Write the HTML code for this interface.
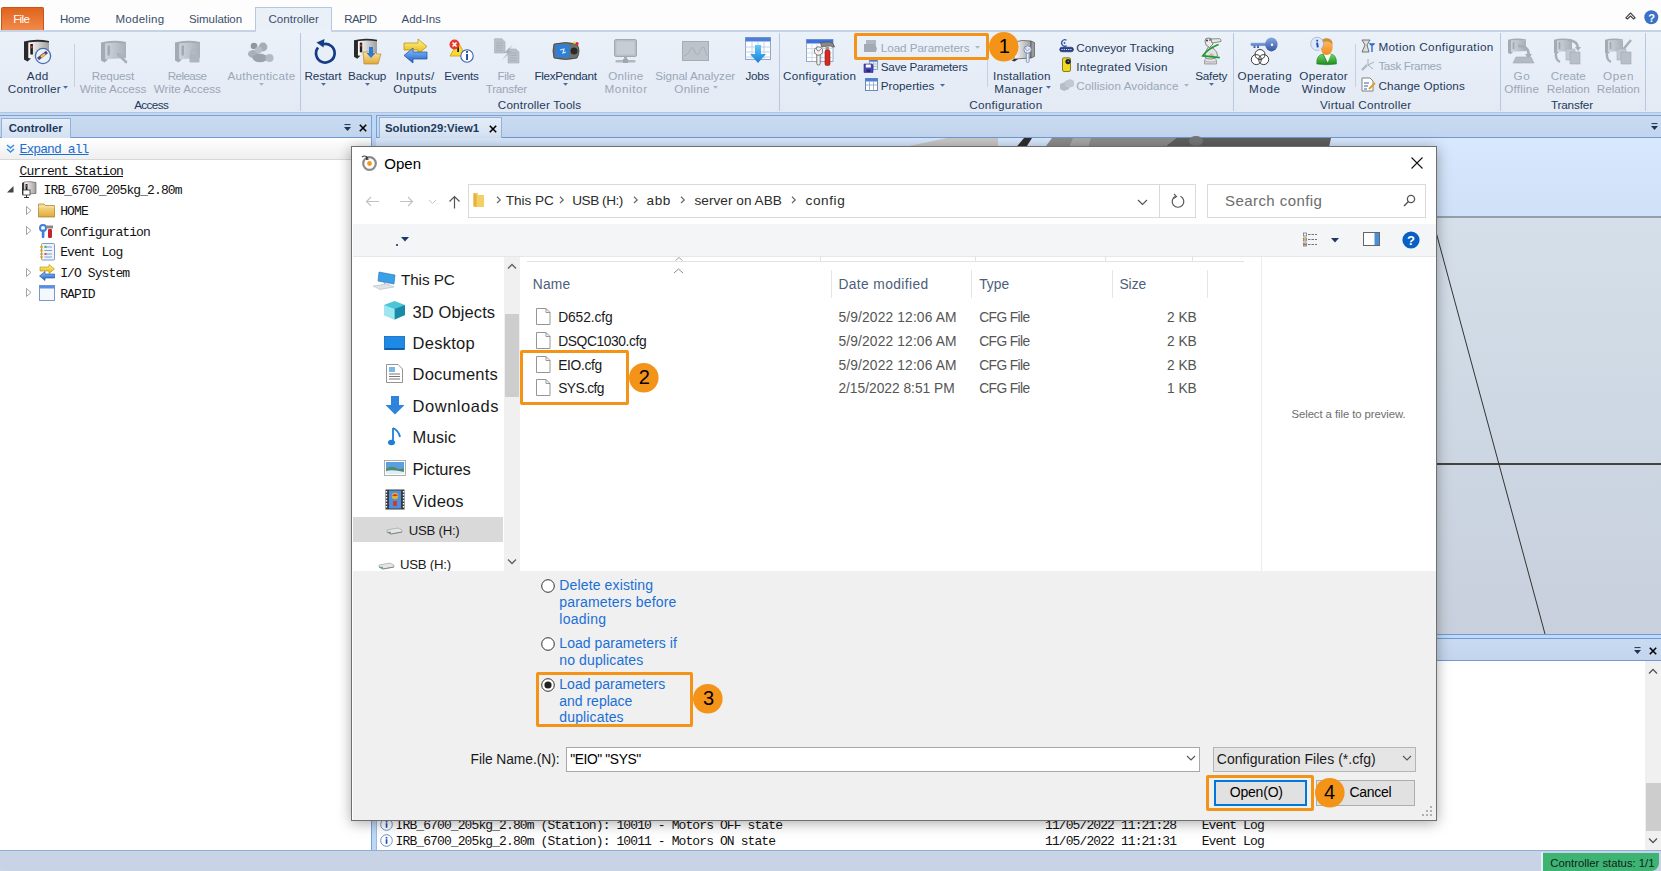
<!DOCTYPE html>
<html><head><meta charset="utf-8">
<style>
*{box-sizing:border-box;margin:0;padding:0}
html,body{width:1661px;height:871px;overflow:hidden;background:#c9d6e8;font-family:"Liberation Sans",sans-serif;position:relative}
.a{position:absolute}
.t{position:absolute;white-space:nowrap}
svg{overflow:visible}
</style></head><body>
<div class="a" style="left:0px;top:0px;width:1661px;height:31px;background:#fdfdfe"></div>
<div class="a" style="left:1px;top:7px;width:43px;height:24px;background:linear-gradient(#e0641c,#f28c4e);border:1px solid #c9541a;border-bottom:none;border-radius:2px 2px 0 0"></div>
<div class="t" style="top:14.00px;font-size:11.5px;color:#fff;left:13.20px;line-height:11.5px;letter-spacing:-0.600px;">File</div>
<div class="t" style="top:14.00px;font-size:11.5px;color:#3b4e69;left:59.90px;line-height:11.5px;letter-spacing:-0.159px;">Home</div>
<div class="t" style="top:14.00px;font-size:11.5px;color:#3b4e69;left:115.40px;line-height:11.5px;letter-spacing:0.290px;">Modeling</div>
<div class="t" style="top:14.00px;font-size:11.5px;color:#3b4e69;left:189.00px;line-height:11.5px;letter-spacing:-0.066px;">Simulation</div>
<div class="t" style="top:14.00px;font-size:11.5px;color:#3b4e69;left:344.30px;line-height:11.5px;letter-spacing:-0.600px;">RAPID</div>
<div class="t" style="top:14.00px;font-size:11.5px;color:#3b4e69;left:401.60px;line-height:11.5px;letter-spacing:-0.072px;">Add-Ins</div>
<div class="a" style="left:255px;top:7px;width:77px;height:25px;background:#eaf0f8;border:1px solid #b6c7de;border-bottom:none"></div>
<div class="t" style="top:14.00px;font-size:11.5px;color:#3b4e69;left:268.40px;line-height:11.5px;letter-spacing:0.061px;">Controller</div>
<svg class="a" style="left:1625px;top:12px" width="11" height="8" viewBox="0 0 11 8"><path d="M0.8 5.8 L5.5 1 L10.2 5.8 L8.6 7 L5.5 4 L2.4 7 Z" fill="#fff" stroke="#444" stroke-width="1.1" stroke-linejoin="round"/></svg>
<svg class="a" style="left:1643.5px;top:9.5px" width="15" height="15" viewBox="0 0 15 15"><circle cx="7.3" cy="7.2" r="7" fill="#3a72c6"/><text x="7.5" y="12" font-size="11" font-weight="bold" text-anchor="middle" fill="#fff" font-family="Liberation Sans">?</text></svg>
<div class="a" style="left:0px;top:30px;width:1661px;height:83px;background:linear-gradient(#ebf1f9,#e3eaf4);border-top:2px solid #c6d3e4"></div>
<div class="a" style="left:0px;top:112px;width:1661px;height:1px;background:#b3c5dc"></div>
<div class="a" style="left:256px;top:30px;width:75px;height:3px;background:#ebf1f9"></div>
<div class="a" style="left:300px;top:33px;width:1px;height:78px;background:#b8c9df"></div>
<div class="a" style="left:779px;top:33px;width:1px;height:78px;background:#b8c9df"></div>
<div class="a" style="left:1233px;top:33px;width:1px;height:78px;background:#b8c9df"></div>
<div class="a" style="left:1500px;top:33px;width:1px;height:78px;background:#b8c9df"></div>
<div class="a" style="left:1645px;top:33px;width:1px;height:78px;background:#b8c9df"></div>
<div class="a" style="left:74px;top:44px;width:1px;height:43px;background:#c3d1e3"></div>
<div class="a" style="left:987px;top:38px;width:1px;height:49px;background:#c3d1e3"></div>
<div class="a" style="left:1355px;top:44px;width:1px;height:43px;background:#c3d1e3"></div>
<div class="t" style="top:99.00px;font-size:11.7px;color:#1e395b;left:-148.80px;width:600px;text-align:center;line-height:11.7px;letter-spacing:-0.600px;">Access</div>
<div class="t" style="top:99.00px;font-size:11.7px;color:#1e395b;left:239.58px;width:600px;text-align:center;line-height:11.7px;letter-spacing:0.155px;">Controller Tools</div>
<div class="t" style="top:99.00px;font-size:11.7px;color:#1e395b;left:705.84px;width:600px;text-align:center;line-height:11.7px;letter-spacing:0.284px;">Configuration</div>
<div class="t" style="top:99.00px;font-size:11.7px;color:#1e395b;left:1065.73px;width:600px;text-align:center;line-height:11.7px;letter-spacing:0.251px;">Virtual Controller</div>
<div class="t" style="top:99.00px;font-size:11.7px;color:#1e395b;left:1271.93px;width:600px;text-align:center;line-height:11.7px;letter-spacing:-0.147px;">Transfer</div>
<div class="t" style="top:70.00px;font-size:11.7px;color:#1e395b;left:-262.30px;width:600px;text-align:center;line-height:11.7px;letter-spacing:0.391px;">Add</div>
<div class="t" style="top:83.00px;font-size:11.7px;color:#1e395b;left:-265.67px;width:600px;text-align:center;line-height:11.7px;letter-spacing:0.264px;">Controller</div>
<div class="t" style="top:70.00px;font-size:11.7px;color:#9ba7b7;left:-187.10px;width:600px;text-align:center;line-height:11.7px;letter-spacing:-0.196px;">Request</div>
<div class="t" style="top:83.00px;font-size:11.7px;color:#9ba7b7;left:-187.04px;width:600px;text-align:center;line-height:11.7px;letter-spacing:-0.073px;">Write Access</div>
<div class="t" style="top:70.00px;font-size:11.7px;color:#9ba7b7;left:-112.99px;width:600px;text-align:center;line-height:11.7px;letter-spacing:-0.588px;">Release</div>
<div class="t" style="top:83.00px;font-size:11.7px;color:#9ba7b7;left:-112.71px;width:600px;text-align:center;line-height:11.7px;letter-spacing:-0.018px;">Write Access</div>
<div class="t" style="top:70.00px;font-size:11.7px;color:#9ba7b7;left:-38.57px;width:600px;text-align:center;line-height:11.7px;letter-spacing:0.250px;">Authenticate</div>
<svg class="a" style="left:259.0px;top:83.2px" width="5" height="3" viewBox="0 0 5 3"><path d="M0 0 L5 0 L2.5 2.8 Z" fill="#aab4c2"/></svg>
<div class="t" style="top:70.00px;font-size:11.7px;color:#1e395b;left:22.96px;width:600px;text-align:center;line-height:11.7px;letter-spacing:-0.085px;">Restart</div>
<svg class="a" style="left:320.7px;top:83.2px" width="5" height="3" viewBox="0 0 5 3"><path d="M0 0 L5 0 L2.5 2.8 Z" fill="#4a6aa2"/></svg>
<div class="t" style="top:70.00px;font-size:11.7px;color:#1e395b;left:67.12px;width:600px;text-align:center;line-height:11.7px;letter-spacing:-0.165px;">Backup</div>
<svg class="a" style="left:364.9px;top:83.2px" width="5" height="3" viewBox="0 0 5 3"><path d="M0 0 L5 0 L2.5 2.8 Z" fill="#4a6aa2"/></svg>
<div class="t" style="top:70.00px;font-size:11.7px;color:#1e395b;left:115.30px;width:600px;text-align:center;line-height:11.7px;letter-spacing:0.600px;">Inputs/</div>
<div class="t" style="top:83.00px;font-size:11.7px;color:#1e395b;left:115.21px;width:600px;text-align:center;line-height:11.7px;letter-spacing:0.421px;">Outputs</div>
<div class="t" style="top:70.00px;font-size:11.7px;color:#1e395b;left:161.39px;width:600px;text-align:center;line-height:11.7px;letter-spacing:-0.214px;">Events</div>
<div class="t" style="top:70.00px;font-size:11.7px;color:#9ba7b7;left:206.19px;width:600px;text-align:center;line-height:11.7px;letter-spacing:-0.418px;">File</div>
<div class="t" style="top:83.00px;font-size:11.7px;color:#9ba7b7;left:206.28px;width:600px;text-align:center;line-height:11.7px;letter-spacing:-0.247px;">Transfer</div>
<div class="t" style="top:70.00px;font-size:11.7px;color:#1e395b;left:265.54px;width:600px;text-align:center;line-height:11.7px;letter-spacing:-0.319px;">FlexPendant</div>
<svg class="a" style="left:563.4000000000001px;top:83.2px" width="5" height="3" viewBox="0 0 5 3"><path d="M0 0 L5 0 L2.5 2.8 Z" fill="#4a6aa2"/></svg>
<div class="t" style="top:70.00px;font-size:11.7px;color:#9ba7b7;left:325.94px;width:600px;text-align:center;line-height:11.7px;letter-spacing:0.276px;">Online</div>
<div class="t" style="top:83.00px;font-size:11.7px;color:#9ba7b7;left:326.10px;width:600px;text-align:center;line-height:11.7px;letter-spacing:0.600px;">Monitor</div>
<div class="t" style="top:70.00px;font-size:11.7px;color:#9ba7b7;left:395.18px;width:600px;text-align:center;line-height:11.7px;letter-spacing:-0.032px;">Signal Analyzer</div>
<div class="t" style="top:83.00px;font-size:11.7px;color:#9ba7b7;left:392.05px;width:600px;text-align:center;line-height:11.7px;letter-spacing:0.296px;">Online</div>
<div class="t" style="top:70.00px;font-size:11.7px;color:#1e395b;left:457.36px;width:600px;text-align:center;line-height:11.7px;letter-spacing:-0.271px;">Jobs</div>
<div class="t" style="top:70.00px;font-size:11.7px;color:#1e395b;left:519.65px;width:600px;text-align:center;line-height:11.7px;letter-spacing:0.300px;">Configuration</div>
<svg class="a" style="left:817.2px;top:83.2px" width="5" height="3" viewBox="0 0 5 3"><path d="M0 0 L5 0 L2.5 2.8 Z" fill="#4a6aa2"/></svg>
<div class="t" style="top:70.00px;font-size:11.7px;color:#1e395b;left:721.87px;width:600px;text-align:center;line-height:11.7px;letter-spacing:0.142px;">Installation</div>
<div class="t" style="top:83.00px;font-size:11.7px;color:#1e395b;left:718.68px;width:600px;text-align:center;line-height:11.7px;letter-spacing:0.353px;">Manager</div>
<div class="t" style="top:70.00px;font-size:11.7px;color:#1e395b;left:911.19px;width:600px;text-align:center;line-height:11.7px;letter-spacing:-0.214px;">Safety</div>
<svg class="a" style="left:1209.0px;top:83.2px" width="5" height="3" viewBox="0 0 5 3"><path d="M0 0 L5 0 L2.5 2.8 Z" fill="#4a6aa2"/></svg>
<div class="t" style="top:70.00px;font-size:11.7px;color:#1e395b;left:964.78px;width:600px;text-align:center;line-height:11.7px;letter-spacing:0.365px;">Operating</div>
<div class="t" style="top:83.00px;font-size:11.7px;color:#1e395b;left:964.90px;width:600px;text-align:center;line-height:11.7px;letter-spacing:0.600px;">Mode</div>
<div class="t" style="top:70.00px;font-size:11.7px;color:#1e395b;left:1023.67px;width:600px;text-align:center;line-height:11.7px;letter-spacing:0.347px;">Operator</div>
<div class="t" style="top:83.00px;font-size:11.7px;color:#1e395b;left:1023.70px;width:600px;text-align:center;line-height:11.7px;letter-spacing:0.397px;">Window</div>
<div class="t" style="top:70.00px;font-size:11.7px;color:#9ba7b7;left:1221.90px;width:600px;text-align:center;line-height:11.7px;letter-spacing:0.600px;">Go</div>
<div class="t" style="top:83.00px;font-size:11.7px;color:#9ba7b7;left:1221.71px;width:600px;text-align:center;line-height:11.7px;letter-spacing:0.216px;">Offline</div>
<div class="t" style="top:70.00px;font-size:11.7px;color:#9ba7b7;left:1268.28px;width:600px;text-align:center;line-height:11.7px;letter-spacing:-0.044px;">Create</div>
<div class="t" style="top:83.00px;font-size:11.7px;color:#9ba7b7;left:1268.31px;width:600px;text-align:center;line-height:11.7px;letter-spacing:0.010px;">Relation</div>
<div class="t" style="top:70.00px;font-size:11.7px;color:#9ba7b7;left:1318.50px;width:600px;text-align:center;line-height:11.7px;letter-spacing:0.600px;">Open</div>
<div class="t" style="top:83.00px;font-size:11.7px;color:#9ba7b7;left:1318.21px;width:600px;text-align:center;line-height:11.7px;letter-spacing:0.010px;">Relation</div>
<div class="t" style="top:42.00px;font-size:11.7px;color:#9ba7b7;left:880.80px;line-height:11.7px;letter-spacing:-0.068px;">Load Parameters</div>
<svg class="a" style="left:975.2px;top:45.900000000000006px" width="5" height="3" viewBox="0 0 5 3"><path d="M0 0 L5 0 L2.5 2.8 Z" fill="#aab4c2"/></svg>
<div class="t" style="top:61.00px;font-size:11.7px;color:#1e395b;left:880.80px;line-height:11.7px;letter-spacing:-0.228px;">Save Parameters</div>
<div class="t" style="top:80.00px;font-size:11.7px;color:#1e395b;left:880.80px;line-height:11.7px;letter-spacing:0.030px;">Properties</div>
<svg class="a" style="left:939.7px;top:84.2px" width="5" height="3" viewBox="0 0 5 3"><path d="M0 0 L5 0 L2.5 2.8 Z" fill="#4a6aa2"/></svg>
<div class="t" style="top:42.00px;font-size:11.7px;color:#1e395b;left:1076.30px;line-height:11.7px;letter-spacing:0.016px;">Conveyor Tracking</div>
<div class="t" style="top:61.00px;font-size:11.7px;color:#1e395b;left:1076.30px;line-height:11.7px;letter-spacing:0.225px;">Integrated Vision</div>
<div class="t" style="top:80.00px;font-size:11.7px;color:#9ba7b7;left:1076.30px;line-height:11.7px;letter-spacing:0.058px;">Collision Avoidance</div>
<svg class="a" style="left:1183.9px;top:84.2px" width="5" height="3" viewBox="0 0 5 3"><path d="M0 0 L5 0 L2.5 2.8 Z" fill="#aab4c2"/></svg>
<div class="t" style="top:41.00px;font-size:11.7px;color:#1e395b;left:1378.40px;line-height:11.7px;letter-spacing:0.370px;">Motion Configuration</div>
<div class="t" style="top:60.00px;font-size:11.7px;color:#9ba7b7;left:1378.40px;line-height:11.7px;letter-spacing:-0.376px;">Task Frames</div>
<div class="t" style="top:80.00px;font-size:11.7px;color:#1e395b;left:1378.40px;line-height:11.7px;letter-spacing:0.149px;">Change Options</div>
<svg class="a" style="left:0;top:0" width="0" height="0"><defs>
<linearGradient id="gCabF" x1="0" x2="1"><stop offset="0" stop-color="#ffffff"/><stop offset="1" stop-color="#a0a0a0"/></linearGradient>
<linearGradient id="gCabG" x1="0" x2="1"><stop offset="0" stop-color="#cfd4db"/><stop offset="1" stop-color="#a9b0ba"/></linearGradient>
<linearGradient id="gYel" x1="0" y1="0" x2="0" y2="1"><stop offset="0" stop-color="#fff59a"/><stop offset="1" stop-color="#e8b400"/></linearGradient>
<linearGradient id="gBlu" x1="0" y1="0" x2="0" y2="1"><stop offset="0" stop-color="#8ec5ff"/><stop offset="1" stop-color="#1f5fc4"/></linearGradient>
<linearGradient id="gFold" x1="0" y1="0" x2="0" y2="1"><stop offset="0" stop-color="#fde39a"/><stop offset="1" stop-color="#e0a93a"/></linearGradient>
<linearGradient id="gArrB" x1="0" y1="0" x2="0" y2="1"><stop offset="0" stop-color="#5cc8ff"/><stop offset="1" stop-color="#1a7fd8"/></linearGradient>
<linearGradient id="gKey" x1="0" y1="0" x2="0" y2="1"><stop offset="0" stop-color="#8aa8e0"/><stop offset="1" stop-color="#3457a3"/></linearGradient>
<linearGradient id="gGreen" x1="0" y1="0" x2="0" y2="1"><stop offset="0" stop-color="#6fd86a"/><stop offset="1" stop-color="#1e8a1e"/></linearGradient>
<linearGradient id="gOrg" x1="0" y1="0" x2="0" y2="1"><stop offset="0" stop-color="#ffc070"/><stop offset="1" stop-color="#f08a20"/></linearGradient>
</defs></svg>
<svg class="a" style="left:24px;top:39px" width="28" height="27" viewBox="0 0 28 27"><g transform="scale(1,1)"><path d="M4.3 3.2 Q14 1.5 25 3.3 L25 18 L4.3 19.2 Z" fill="url(#gCabF)"/><path d="M0 2.5 Q12 -0.8 25 2 L25 3.6 Q14 1.8 4.3 3.4 L4.3 19 L7 19.4 L3.5 22.5 L0 20.5 Z" fill="#2a2a2a"/><rect x="6.3" y="5" width="2.6" height="10.5" fill="#1e1e1e"/><rect x="6.7" y="7" width="1.8" height="2.2" fill="#e8321e"/></g><circle cx="19" cy="17" r="7.6" fill="#e6f3fb" stroke="#4a6fa8" stroke-width="1.3"/><path d="M14 20 L23 13" stroke="#5a3b8c" stroke-width="3"/><path d="M17 18 L21 15" stroke="#f2c230" stroke-width="2.2"/></svg>
<svg class="a" style="left:101px;top:40px" width="28" height="26" viewBox="0 0 28 26"><g transform="scale(1,1)"><path d="M4.3 3.2 Q14 1.5 25 3.3 L25 18 L4.3 19.2 Z" fill="url(#gCabG)"/><path d="M0 2.5 Q12 -0.8 25 2 L25 3.6 Q14 1.8 4.3 3.4 L4.3 19 L7 19.4 L3.5 22.5 L0 20.5 Z" fill="#a3abb6"/><rect x="6.5" y="5.5" width="2.4" height="10" fill="#a0a8b2"/></g><path d="M17 14 L25 22" stroke="#a9b0ba" stroke-width="2.6" stroke-linecap="round"/></svg>
<svg class="a" style="left:175px;top:40px" width="28" height="26" viewBox="0 0 28 26"><g transform="scale(1,1)"><path d="M4.3 3.2 Q14 1.5 25 3.3 L25 18 L4.3 19.2 Z" fill="url(#gCabG)"/><path d="M0 2.5 Q12 -0.8 25 2 L25 3.6 Q14 1.8 4.3 3.4 L4.3 19 L7 19.4 L3.5 22.5 L0 20.5 Z" fill="#a3abb6"/><rect x="6.5" y="5.5" width="2.4" height="10" fill="#a0a8b2"/></g><rect x="14.5" y="14.5" width="10" height="8" rx="1" fill="#aeb5bf"/><path d="M16.5 15 V12.5 a3 3 0 0 1 6 0 V15" fill="none" stroke="#aeb5bf" stroke-width="1.5"/></svg>
<svg class="a" style="left:248px;top:42px" width="27" height="22" viewBox="0 0 27 22"><circle cx="6" cy="4" r="3.3" fill="#8d96a2"/><circle cx="15" cy="5" r="4.4" fill="#a6aeb8"/><ellipse cx="5.5" cy="12" rx="5.5" ry="4" fill="#a8b0ba"/><circle cx="10.5" cy="8" r="3.6" fill="#b8bec7"/><ellipse cx="12" cy="16" rx="7.5" ry="4.2" fill="#9ba3ae"/><circle cx="21.5" cy="16" r="4" fill="#b3bac3"/></svg>
<svg class="a" style="left:312px;top:38px" width="25" height="27" viewBox="0 0 25 27"><path d="M6 9.5 A9.3 9.3 0 1 0 11 6.2" fill="none" stroke="#143c86" stroke-width="2.7"/><path d="M4.5 4.5 L12.5 1 L11.5 9.5 Z" fill="#143c86"/></svg>
<svg class="a" style="left:354px;top:38px" width="28" height="27" viewBox="0 0 28 27"><g transform="scale(0.92,0.92)"><path d="M4.3 3.2 Q14 1.5 25 3.3 L25 18 L4.3 19.2 Z" fill="url(#gCabF)"/><path d="M0 2.5 Q12 -0.8 25 2 L25 3.6 Q14 1.8 4.3 3.4 L4.3 19 L7 19.4 L3.5 22.5 L0 20.5 Z" fill="#2a2a2a"/><rect x="6.3" y="5" width="2.6" height="10.5" fill="#1e1e1e"/><rect x="6.7" y="7" width="1.8" height="2.2" fill="#e8321e"/></g><path d="M9 14 L21 14 L23 16 L27 16 L24 26 L10 26 Z" fill="url(#gFold)" stroke="#b07a20" stroke-width="0.6"/><path d="M15 9 L19 9 L19 15 L21.5 15 L17 20 L12.5 15 L15 15 Z" fill="#2a7ad8"/></svg>
<svg class="a" style="left:403px;top:38px" width="25" height="27" viewBox="0 0 25 27"><path d="M1 5 L15 5 L15 1 L24 8.5 L15 16 L15 12 L1 12 Z" fill="url(#gYel)" stroke="#b08a00" stroke-width="0.7"/><path d="M24 14 L10 14 L10 10 L1 17.5 L10 25 L10 21 L24 21 Z" fill="url(#gBlu)" stroke="#1c4a9a" stroke-width="0.7"/></svg>
<svg class="a" style="left:449px;top:39px" width="26" height="25" viewBox="0 0 26 25"><path d="M9 3 L17 17 L1 17 Z" fill="#f5d93a" stroke="#c9a000" stroke-width="0.8"/><rect x="8.2" y="8" width="1.8" height="5" fill="#222"/><circle cx="5.5" cy="5.5" r="5" fill="#e53a2a"/><path d="M3.5 3.5 L7.5 7.5 M7.5 3.5 L3.5 7.5" stroke="#fff" stroke-width="1.5"/><circle cx="18" cy="17" r="6.2" fill="#fff" stroke="#3b5fb0" stroke-width="1.1"/><rect x="17.1" y="15" width="1.9" height="6" fill="#1f46a8"/><rect x="17.1" y="12" width="1.9" height="1.8" fill="#1f46a8"/></svg>
<svg class="a" style="left:494px;top:38px" width="26" height="27" viewBox="0 0 26 27"><path d="M0.5 0.7 L8 0.7 L11 3.7 L11 15 L0.5 15 Z" fill="#b9c0c9" stroke="#a6adb7" stroke-width="0.6"/><path d="M2 5 H9 M2 7.5 H9 M2 10 H9 M2 12.5 H9" stroke="#a3aab4" stroke-width="0.7"/><path d="M14 11 L22 11 L25 14 L25 25 L14 25 Z" fill="#b9c0c9" stroke="#a6adb7" stroke-width="0.6"/><path d="M15.5 15 H23 M15.5 17.5 H23 M15.5 20 H23 M15.5 22.5 H23" stroke="#a3aab4" stroke-width="0.7"/><path d="M19 6.5 L10 15 L13.5 15 L8 22 L17.5 13 L14 13 Z" fill="#a9b0ba"/></svg>
<svg class="a" style="left:552px;top:41px" width="29" height="21" viewBox="0 0 29 21"><path d="M2 3 Q0 10 2 17 Q14 20 25 17 Q29 10 25 3 Q14 0 2 3Z" fill="#6f6f6f" stroke="#3c3c3c" stroke-width="0.8"/><rect x="3.5" y="3.5" width="14" height="13" fill="#2f7fd6"/><circle cx="22" cy="10" r="3.5" fill="#2a2a2a"/><circle cx="25" cy="2.5" r="1.6" fill="#e8261b"/><circle cx="22.5" cy="1.8" r="1.3" fill="#f2d22b"/><path d="M8 9 L12 8 L11 12 L14 11" stroke="#cfe8ff" stroke-width="1.2" fill="none"/></svg>
<svg class="a" style="left:614px;top:39px" width="24" height="26" viewBox="0 0 24 26"><rect x="0.5" y="0.5" width="22" height="17" rx="1.5" fill="#b7bec7" stroke="#a2a9b3"/><rect x="2.5" y="2.5" width="18" height="13" fill="#c7cdd5"/><rect x="10" y="18" width="3" height="4" fill="#a9b0ba"/><rect x="1.5" y="21" width="20" height="2.5" rx="1" fill="#b1b8c1"/><rect x="9" y="20" width="5" height="4" fill="#a0a7b1"/></svg>
<svg class="a" style="left:682px;top:41px" width="27" height="21" viewBox="0 0 27 21"><rect x="0.5" y="0.5" width="26" height="19" fill="#bcc3cb" stroke="#a5acb5"/><path d="M2 15 Q6 14 9 8 Q11 4 13 11 Q15 17 18 10 Q20 5 22 6 L25 15" fill="none" stroke="#a2a9b3" stroke-width="0.8"/></svg>
<svg class="a" style="left:745px;top:37px" width="27" height="28" viewBox="0 0 27 28"><rect x="0.5" y="0.5" width="25" height="22" fill="#fff" stroke="#8fa6c8"/><rect x="0.5" y="0.5" width="25" height="4" fill="#4d7fd6"/><path d="M0.5 10 H25.5 M0.5 15 H25.5 M0.5 20 H25.5 M7 4.5 V22.5 M13 4.5 V22.5 M19 4.5 V22.5" stroke="#b9c8de" stroke-width="0.8"/><path d="M10 8 L16 8 L16 17 L21 17 L13 26 L5 17 L10 17 Z" fill="url(#gArrB)"/></svg>
<svg class="a" style="left:806px;top:39px" width="30" height="27" viewBox="0 0 30 27"><rect x="0.5" y="0.5" width="26.5" height="22" fill="#fff" stroke="#8ea3c2" stroke-width="0.9"/><rect x="0.5" y="0.5" width="26.5" height="4" fill="#3f72d8"/><path d="M1 9.5 H26.5 M1 14 H26.5 M1 18.5 H26.5 M6 4.5 V22 M11 4.5 V22 M16 4.5 V22 M21 4.5 V22" stroke="#c9d6ea" stroke-width="0.9"/><path d="M14.5 3.5 L24 3 Q28 4 28.5 8 L26 8 Q25 6.5 23 7 L15.5 8Z" fill="#8a8a8a" stroke="#444" stroke-width="0.6"/><rect x="19.5" y="7.5" width="3.6" height="6" fill="#9a9a9a"/><rect x="19" y="11" width="5" height="15.5" rx="1.6" fill="#d42a20" stroke="#8a1a14" stroke-width="0.6"/><rect x="10.8" y="14" width="3.4" height="12" rx="1.5" fill="#f2f2f2" stroke="#5a5a5a" stroke-width="0.8"/><circle cx="12.5" cy="12" r="4.2" fill="#f2f2f2" stroke="#5a5a5a" stroke-width="0.8"/><path d="M11 8.5 A2 2 0 1 0 14.5 10" fill="none" stroke="#6a6a6a" stroke-width="0.9"/></svg>
<svg class="a" style="left:1010px;top:38px" width="28" height="28" viewBox="0 0 28 28"><path d="M4 4 Q12 1.5 21 3 L21 20 L4 21 Z" fill="url(#gCabF)" stroke="#4a4a4a" stroke-width="0.7"/><path d="M21 3 L24.5 4.5 L24.5 18.5 L21 20Z" fill="#9a9a9a" stroke="#444" stroke-width="0.6"/><path d="M4 21 L1.5 22.5 L4.5 23.5 L8 21Z" fill="#333"/><rect x="16.3" y="13" width="2.8" height="11.5" rx="1.3" fill="#e8eef8" stroke="#6d86ad" stroke-width="0.8"/><circle cx="17.6" cy="11.5" r="3.7" fill="#e8eef8" stroke="#6d86ad" stroke-width="0.9"/><path d="M16.2 9.5 A1.7 1.7 0 1 0 19 10.5" fill="none" stroke="#6d86ad" stroke-width="0.8"/></svg>
<svg class="a" style="left:1199px;top:36px" width="24" height="30" viewBox="0 0 24 30"><path d="M5.5 28 L5.5 24.5 Q11 22.5 17.5 24.5 L17.5 28 Z" fill="#d6d6d6" stroke="#777" stroke-width="0.6"/><ellipse cx="11.5" cy="24" rx="6" ry="2" fill="#e4e4e4" stroke="#888" stroke-width="0.5"/><path d="M6.5 22 Q5 17 8 13 L10 10 L14 12 Q19 16 18.5 20 Q17 23 12 23 Q8 23 6.5 22Z" fill="#e2e2e2" stroke="#666" stroke-width="0.7"/><circle cx="12.5" cy="19.5" r="2.2" fill="#bbb"/><path d="M6 5 Q6 2 9 2 L12 2.5 L14 8 L10.5 11.5 L7 9 Z" fill="#ebebeb" stroke="#555" stroke-width="0.7"/><circle cx="8" cy="4.5" r="0.9" fill="#222"/><circle cx="11" cy="4" r="0.8" fill="#222"/><path d="M12 3 L20.5 2.6 Q22.5 3.2 22 5.5 L13 7 Z" fill="#e6e6e6" stroke="#666" stroke-width="0.7"/><path d="M19.5 8.5 Q9 12.5 3.8 19.8 Q11 20.5 20.8 21.6" fill="none" stroke="#1f9a2e" stroke-width="1.7"/></svg>
<svg class="a" style="left:1246px;top:34px" width="30" height="32" viewBox="0 0 30 32"><path d="M5 8.7 L21 8.7 L21 11.8 L13 11.8 L13 14 L11 14 L11 11.8 L9.5 11.8 L9.5 14 L7.5 14 L7.5 11.8 L5 11.8 Q4 10.2 5 8.7Z" fill="url(#gKey)"/><ellipse cx="25.4" cy="10.4" rx="6.2" ry="7" fill="url(#gKey)"/><circle cx="26" cy="10.8" r="1.2" fill="#fff"/><g fill="#fff"><circle cx="14" cy="20.5" r="5"/><circle cx="10.3" cy="25.6" r="5"/><circle cx="17.7" cy="25.6" r="5"/></g><g fill="none" stroke="#3a3a3a" stroke-width="1"><circle cx="14" cy="20.5" r="5"/><circle cx="10.3" cy="25.6" r="5"/><circle cx="17.7" cy="25.6" r="5"/></g></svg>
<svg class="a" style="left:1306px;top:34px" width="32" height="32" viewBox="0 0 32 32"><path d="M10.8 30 Q10 21 17 20 L25 20 Q31 21 30.5 30 Q21 31.5 10.8 30Z" fill="url(#gGreen)" stroke="#1c7a1c" stroke-width="0.5"/><path d="M17 20 L21.5 29 L25 20 Z" fill="#f4fff4"/><path d="M17 20 L21.5 29" stroke="#1e6e1e" stroke-width="0.8"/><ellipse cx="20.6" cy="12.7" rx="6.1" ry="8.4" fill="url(#gOrg)"/><path d="M14.6 11 Q14 4.3 20.6 4.3 Q27 4.3 26.6 11 Q24 7 20.6 7.5 Q17 7 14.6 11Z" fill="#c9913a"/><ellipse cx="11.1" cy="9.8" rx="6.4" ry="6.6" fill="#dbe9fb" stroke="#9aa9bb" stroke-width="0.7"/><path d="M13 15.5 L15.5 18.5 L15 14.5Z" fill="#dbe9fb"/><rect x="10.5" y="8.5" width="1.9" height="5" fill="#1f46a8" transform="rotate(-8 11.5 11)"/><rect x="10.3" y="5.8" width="1.8" height="1.7" fill="#1f46a8"/></svg>
<svg class="a" style="left:1508px;top:38px" width="28" height="26" viewBox="0 0 28 26"><g transform="scale(0.72,0.72)"><path d="M4.3 3.2 Q14 1.5 25 3.3 L25 18 L4.3 19.2 Z" fill="url(#gCabG)"/><path d="M0 2.5 Q12 -0.8 25 2 L25 3.6 Q14 1.8 4.3 3.4 L4.3 19 L7 19.4 L3.5 22.5 L0 20.5 Z" fill="#a3abb6"/><rect x="6.5" y="5.5" width="2.4" height="10" fill="#a0a8b2"/></g><path d="M10 8 Q20 7 21 17" fill="none" stroke="#a7aeb8" stroke-width="2.6"/><path d="M17 16 L24 16 L20.5 21Z" fill="#a7aeb8"/><path d="M5 25 L8 19 L23 19 L26 25 Z" fill="#b3bac3" stroke="#a0a7b1" stroke-width="0.6"/></svg>
<svg class="a" style="left:1554px;top:38px" width="28" height="26" viewBox="0 0 28 26"><g transform="scale(0.72,0.72)"><path d="M4.3 3.2 Q14 1.5 25 3.3 L25 18 L4.3 19.2 Z" fill="url(#gCabG)"/><path d="M0 2.5 Q12 -0.8 25 2 L25 3.6 Q14 1.8 4.3 3.4 L4.3 19 L7 19.4 L3.5 22.5 L0 20.5 Z" fill="#a3abb6"/><rect x="6.5" y="5.5" width="2.4" height="10" fill="#a0a8b2"/></g><path d="M14 2 Q24 3 24 10" fill="none" stroke="#a7aeb8" stroke-width="2.4"/><path d="M21 9 L27 9 L24 13Z" fill="#a7aeb8"/><path d="M6 24 Q1 22 2 14" fill="none" stroke="#a7aeb8" stroke-width="2.4"/><rect x="12" y="11" width="9" height="11" fill="#c3c9d1" stroke="#a8afb9" stroke-width="0.6"/><rect x="16" y="14" width="10" height="12" fill="#b8bfc8" stroke="#a0a7b1" stroke-width="0.6"/></svg>
<svg class="a" style="left:1605px;top:38px" width="28" height="26" viewBox="0 0 28 26"><g transform="scale(0.72,0.72)"><path d="M4.3 3.2 Q14 1.5 25 3.3 L25 18 L4.3 19.2 Z" fill="url(#gCabG)"/><path d="M0 2.5 Q12 -0.8 25 2 L25 3.6 Q14 1.8 4.3 3.4 L4.3 19 L7 19.4 L3.5 22.5 L0 20.5 Z" fill="#a3abb6"/><rect x="6.5" y="5.5" width="2.4" height="10" fill="#a0a8b2"/></g><path d="M16 14 L26 2" stroke="#a7aeb8" stroke-width="2.4"/><path d="M6 24 Q1 22 2 14" fill="none" stroke="#a7aeb8" stroke-width="2.4"/><rect x="12" y="11" width="9" height="11" fill="#c3c9d1" stroke="#a8afb9" stroke-width="0.6"/><rect x="16" y="14" width="10" height="12" fill="#b8bfc8" stroke="#a0a7b1" stroke-width="0.6"/></svg>
<svg class="a" style="left:864px;top:39px" width="14" height="14" viewBox="0 0 14 14"><path d="M2 1 L12 1 L12 12 L2 13 Z" fill="#b0b7c0"/><path d="M0 5 L10 5 L13 9 L12 13 L0 13 Z" fill="#a3aab4"/></svg>
<svg class="a" style="left:863px;top:59px" width="15" height="14" viewBox="0 0 15 14"><rect x="6.5" y="0.5" width="8" height="10" fill="#e8eef6" stroke="#7f93b3" stroke-width="0.8"/><rect x="6.5" y="0.5" width="8" height="2.2" fill="#4b7bd4"/><path d="M7 5 H14.5 M7 7.5 H14.5 M10.5 2.7 V10.5" stroke="#9fb1cc" stroke-width="0.7"/><path d="M1 5 L9 5 L10 6 L10 13.5 L1 13.5 Z" fill="#4a47b8" stroke="#2a2880" stroke-width="0.6"/><rect x="2.8" y="5.5" width="5" height="3" fill="#fff"/><rect x="3.5" y="10.5" width="4" height="2.5" fill="#2a2870"/></svg>
<svg class="a" style="left:865px;top:78px" width="13" height="13" viewBox="0 0 13 13"><rect x="0.5" y="0.5" width="12" height="12" fill="#fff" stroke="#6b87b5"/><rect x="0.5" y="0.5" width="12" height="3" fill="#4d7fd6"/><path d="M0.5 7 H12.5 M4.5 3.5 V12.5 M8.5 3.5 V12.5" stroke="#8aa0c8" stroke-width="0.8"/></svg>
<svg class="a" style="left:1059px;top:38px" width="16" height="15" viewBox="0 0 16 15"><path d="M7.5 2.2 A3.2 3.2 0 1 0 7.6 7.6" fill="none" stroke="#2c56a8" stroke-width="1.3"/><circle cx="5.5" cy="5" r="0.9" fill="#2c56a8"/><rect x="0.7" y="9.2" width="13.8" height="4.6" rx="2.3" fill="#2a3f8a" stroke="#1a2a60" stroke-width="0.6"/><path d="M2.5 11.5 H12.5" stroke="#cfe0ff" stroke-width="1.2" stroke-dasharray="1.3 0.9"/></svg>
<svg class="a" style="left:1061px;top:57px" width="11" height="16" viewBox="0 0 11 16"><path d="M1.5 2 Q1.5 0.8 3 0.8 L8 0.8 Q9.5 0.8 9.5 2 L9.5 13 Q9.5 14.5 8 14.5 L3 14.5 Q1.5 14.5 1.5 13 Z" fill="#f0d81a" stroke="#5a5200" stroke-width="0.7"/><circle cx="7" cy="4.6" r="2.6" fill="#1a1a3a"/><circle cx="7.3" cy="4.3" r="0.8" fill="#8899cc"/></svg>
<svg class="a" style="left:1059px;top:78px" width="15" height="13" viewBox="0 0 15 13"><path d="M1 6 L6 4 L10 6 L10 11 L5 13 L1 11Z" fill="#b5bcc5"/><path d="M6 3 L11 1 L15 3 L15 8 L10 10 L6 8Z" fill="#c2c8d0"/></svg>
<svg class="a" style="left:1361px;top:39px" width="15" height="15" viewBox="0 0 15 15"><path d="M1 1 L9 1 L6 6 L8 13 L1 13 L4 6 Z" fill="#ddd" stroke="#555" stroke-width="0.8"/><path d="M11 4 V13 M9 4 a2 2 0 0 0 4 0" fill="none" stroke="#2a6ad0" stroke-width="1.4"/></svg>
<svg class="a" style="left:1361px;top:58px" width="15" height="14" viewBox="0 0 15 14"><path d="M1 12 L6 7" stroke="#b0b7c0" stroke-width="2.4"/><path d="M7 7 V1 M7 7 L13 4 M7 7 L12 11" stroke="#a8afb9" stroke-width="1"/></svg>
<svg class="a" style="left:1361px;top:77px" width="15" height="15" viewBox="0 0 15 15"><path d="M1 1 L9 1 L12 4 L12 14 L1 14 Z" fill="#fff" stroke="#666" stroke-width="0.8"/><path d="M3 6 H8 M3 9 H7 M3 12 H6" stroke="#3a5fb0" stroke-width="1"/><path d="M8 12 L14 6" stroke="#e0a020" stroke-width="2"/></svg>
<svg class="a" style="left:63.0px;top:85.7px" width="5" height="3" viewBox="0 0 5 3"><path d="M0 0 L5 0 L2.5 2.8 Z" fill="#4a6aa2"/></svg>
<svg class="a" style="left:1045.7px;top:85.7px" width="5" height="3" viewBox="0 0 5 3"><path d="M0 0 L5 0 L2.5 2.8 Z" fill="#4a6aa2"/></svg>
<svg class="a" style="left:712.5px;top:85.7px" width="5" height="3" viewBox="0 0 5 3"><path d="M0 0 L5 0 L2.5 2.8 Z" fill="#aab4c2"/></svg>
<div class="a" style="left:0px;top:113px;width:1661px;height:738px;background:#c4d8f1"></div>
<div class="a" style="left:0px;top:115px;width:372px;height:23px;background:linear-gradient(#c9dbf1,#c2d5ed);border-top:1px solid #79a1d3;border-right:1px solid #79a1d3;border-bottom:1px solid #6f9bd1"></div>
<div class="a" style="left:1px;top:118px;width:70px;height:20px;background:linear-gradient(#e4edf8,#d3e1f2);border:1px solid #93b2d8;border-bottom:none"></div>
<div class="t" style="top:123.00px;font-size:11.3px;color:#1e395b;font-weight:bold;left:8.70px;line-height:11.3px;">Controller</div>
<svg class="a" style="left:343.5px;top:123.5px" width="8" height="8" viewBox="0 0 8 8"><rect x="0.5" y="0" width="6" height="1.1" fill="#2a3f60"/><path d="M0 3 L7 3 L3.5 7 Z" fill="#1e3358"/></svg>
<svg class="a" style="left:359px;top:123.5px" width="8" height="8" viewBox="0 0 8 8"><path d="M0.8 0.8 L7.2 7.2 M7.2 0.8 L0.8 7.2" stroke="#000" stroke-width="1.6"/></svg>
<div class="a" style="left:0px;top:138px;width:371px;height:713px;background:#fff"></div>
<div class="a" style="left:0px;top:138px;width:371px;height:22px;background:linear-gradient(#fff,#efefef);border-bottom:1px solid #d8d8d8"></div>
<svg class="a" style="left:6px;top:144px" width="9" height="10" viewBox="0 0 9 10"><path d="M1 1 L4.5 4 L8 1 M1 5 L4.5 8 L8 5" fill="none" stroke="#3a8ee6" stroke-width="1.6"/></svg>
<div class="t" style="top:143.00px;font-size:13px;color:#1a6dd4;font-family:'Liberation Mono',monospace;left:19.50px;line-height:13px;letter-spacing:-0.9px"><u>Expand all</u></div>
<div class="t" style="top:165.00px;font-size:13px;color:#111;font-family:'Liberation Mono',monospace;left:19.50px;line-height:13px;letter-spacing:-0.9px"><u>Current Station</u></div>
<div class="t" style="top:184.00px;font-size:13px;color:#111;font-family:'Liberation Mono',monospace;left:43.60px;line-height:13px;letter-spacing:-0.9px">IRB_6700_205kg_2.80m</div>
<svg class="a" style="left:6.5px;top:186px" width="7" height="7" viewBox="0 0 7 7"><path d="M6.5 0 L6.5 6.5 L0 6.5 Z" fill="#444"/></svg>
<svg class="a" style="left:21px;top:181px" width="16" height="18" viewBox="0 0 16 18"><path d="M1 2 L3 1 L3 13 L1 14Z" fill="#333"/><path d="M3 1 Q9 0 15 1.5 L15 12.5 L3 13Z" fill="url(#gCabF)" stroke="#555" stroke-width="0.6"/><rect x="4.5" y="3" width="2" height="6" fill="#222"/><rect x="4.8" y="4" width="1.4" height="1.5" fill="#e33"/><rect x="2" y="9" width="7" height="5" fill="#fff" stroke="#333" stroke-width="0.8"/><path d="M5.5 14 V16 M3 16.5 H8" stroke="#333" stroke-width="1"/></svg>
<div class="t" style="top:205.00px;font-size:13px;color:#111;font-family:'Liberation Mono',monospace;left:60.20px;line-height:13px;letter-spacing:-0.9px">HOME</div>
<svg class="a" style="left:26px;top:205.5px" width="6" height="9" viewBox="0 0 6 9"><path d="M0.5 0.5 L5 4.5 L0.5 8.5 Z" fill="none" stroke="#999" stroke-width="0.9"/></svg>
<div class="t" style="top:226.00px;font-size:13px;color:#111;font-family:'Liberation Mono',monospace;left:60.20px;line-height:13px;letter-spacing:-0.9px">Configuration</div>
<svg class="a" style="left:26px;top:226.3px" width="6" height="9" viewBox="0 0 6 9"><path d="M0.5 0.5 L5 4.5 L0.5 8.5 Z" fill="none" stroke="#999" stroke-width="0.9"/></svg>
<div class="t" style="top:246.00px;font-size:13px;color:#111;font-family:'Liberation Mono',monospace;left:60.20px;line-height:13px;letter-spacing:-0.9px">Event Log</div>
<div class="t" style="top:267.00px;font-size:13px;color:#111;font-family:'Liberation Mono',monospace;left:60.20px;line-height:13px;letter-spacing:-0.9px">I/O System</div>
<svg class="a" style="left:26px;top:267.7px" width="6" height="9" viewBox="0 0 6 9"><path d="M0.5 0.5 L5 4.5 L0.5 8.5 Z" fill="none" stroke="#999" stroke-width="0.9"/></svg>
<div class="t" style="top:288.00px;font-size:13px;color:#111;font-family:'Liberation Mono',monospace;left:60.20px;line-height:13px;letter-spacing:-0.9px">RAPID</div>
<svg class="a" style="left:26px;top:288.3px" width="6" height="9" viewBox="0 0 6 9"><path d="M0.5 0.5 L5 4.5 L0.5 8.5 Z" fill="none" stroke="#999" stroke-width="0.9"/></svg>
<svg class="a" style="left:38px;top:203px" width="18" height="15" viewBox="0 0 18 15"><path d="M0.5 1 L6 1 L7.5 2.5 L16.5 2.5 L16.5 14 L0.5 14Z" fill="url(#gFold)" stroke="#9a7a30" stroke-width="0.7"/><path d="M0.5 4 H16.5" stroke="#f9e5a8" stroke-width="0.8"/></svg>
<svg class="a" style="left:39px;top:224px" width="15" height="15" viewBox="0 0 15 15"><circle cx="4" cy="4" r="3" fill="none" stroke="#3f7fd6" stroke-width="2"/><rect x="2.8" y="5.5" width="2.6" height="8.5" rx="1" fill="#3f7fd6"/><rect x="9" y="5" width="4" height="9" rx="1.2" fill="#c8252a"/><path d="M7 1.5 L14 1.5 L14 4.5 L7 4.5Z" fill="#888"/></svg>
<svg class="a" style="left:39px;top:243px" width="16" height="18" viewBox="0 0 16 18"><rect x="2.5" y="0.5" width="13" height="16.5" rx="1" fill="#eef3fb" stroke="#6f8fbf" stroke-width="0.9"/><path d="M5.5 4 H13 M5.5 7.5 H13 M5.5 11 H13 M5.5 14 H13" stroke="#7aa0d0" stroke-width="1"/><circle cx="2.5" cy="4" r="1.3" fill="#e3a21a"/><circle cx="2.5" cy="7.5" r="1.3" fill="#e3a21a"/><circle cx="2.5" cy="11" r="1.3" fill="#e3a21a"/><circle cx="2.5" cy="14" r="1.3" fill="#e3a21a"/><rect x="5.5" y="2.8" width="2" height="2" fill="#3bbf3b"/><rect x="5.5" y="10" width="2" height="2" fill="#e05555"/></svg>
<svg class="a" style="left:39px;top:264px" width="16" height="17" viewBox="0 0 16 17"><path d="M1 3 L10 3 L10 0.5 L15.5 5 L10 9.5 L10 7 L1 7 Z" fill="url(#gYel)" stroke="#b08a00" stroke-width="0.6"/><path d="M15.5 10 L6 10 L6 7.5 L0.5 12 L6 16.5 L6 14 L15.5 14 Z" fill="url(#gBlu)" stroke="#1c4a9a" stroke-width="0.6"/></svg>
<svg class="a" style="left:39px;top:285px" width="16" height="16" viewBox="0 0 16 16"><rect x="0.5" y="0.5" width="15" height="15" fill="#f4f7fc" stroke="#6f8fbf" stroke-width="0.9"/><rect x="0.5" y="0.5" width="15" height="3" fill="#5b8fe0"/></svg>
<div class="a" style="left:371px;top:115px;width:1px;height:736px;background:#79a1d3"></div>
<div class="a" style="left:372px;top:115px;width:4px;height:736px;background:#bdd7f6"></div>
<div class="a" style="left:376px;top:115px;width:1px;height:736px;background:#79a1d3"></div>
<div class="a" style="left:376px;top:115px;width:1285px;height:23px;background:linear-gradient(#c9dbf1,#c2d5ed);border-top:1px solid #79a1d3;border-left:1px solid #79a1d3;border-bottom:1px solid #6f9bd1"></div>
<div class="a" style="left:379px;top:117px;width:123px;height:21px;background:linear-gradient(#e4edf8,#d3e1f2);border:1px solid #93b2d8;border-bottom:none"></div>
<div class="t" style="top:123.00px;font-size:11.4px;color:#1e395b;font-weight:bold;left:385.00px;line-height:11.4px;">Solution29:View1</div>
<svg class="a" style="left:489px;top:124.5px" width="8" height="8" viewBox="0 0 8 8"><path d="M0.8 0.8 L7.2 7.2 M7.2 0.8 L0.8 7.2" stroke="#000" stroke-width="1.6"/></svg>
<svg class="a" style="left:1650.5px;top:122.5px" width="8" height="8" viewBox="0 0 8 8"><rect x="0.5" y="0" width="6" height="1.1" fill="#2a3f60"/><path d="M0 3 L7 3 L3.5 7 Z" fill="#1e3358"/></svg>
<div class="a" style="left:376px;top:138px;width:1285px;height:496px;background:linear-gradient(#d6e5f7 0px,#d1e0f3 78px,#cdd7e3 80px,#cbd4e0 496px)"></div>
<svg class="a" style="left:376px;top:138px" width="1285" height="496" viewBox="0 0 1285 496">
<defs><linearGradient id="gFloor" x1="0" y1="0" x2="0" y2="1"><stop offset="0" stop-color="#d4dfea"/><stop offset="1" stop-color="#c7d0dc"/></linearGradient><linearGradient id="gSky" x1="0" y1="0" x2="0" y2="1"><stop offset="0" stop-color="#d8e8fd"/><stop offset="1" stop-color="#cfe1f8"/></linearGradient></defs>
<rect x="0" y="0" width="1285" height="78" fill="url(#gSky)"/>
<rect x="0" y="78" width="1285" height="2" fill="#959fab"/>
<rect x="0" y="80" width="1285" height="416" fill="url(#gFloor)"/>
<rect x="0" y="325" width="1285" height="2" fill="#444"/>
<path d="M1060 94 L1169 496" stroke="#333" stroke-width="1"/>
<path d="M526 9.5 L571 0 L622 0 L622 9.5 Z" fill="#c9c9c9"/>
<path d="M640 9.5 L648 0 L656 0 L650 9.5 Z" fill="#2e2e2e"/>
<path d="M669 9.5 L676 0 L800 0 L788 9.5 Z" fill="#8d8d8d"/>
<path d="M693 9.5 L697 0 L715 0 L712 9.5 Z" fill="#a8a8a8"/>
<path d="M788 9.5 L800 0 L955 0 L953 9.5 Z" fill="#606060"/>
<ellipse cx="820" cy="3" rx="7" ry="5" fill="#777"/>
</svg>
<div class="a" style="left:376px;top:634px;width:1285px;height:5px;background:#bfdafa;border-top:1px solid #6f9bd1"></div>
<div class="a" style="left:376px;top:638px;width:1285px;height:23px;background:linear-gradient(#c9dbf1,#c2d5ed);border-top:1px solid #6f9bd1;border-bottom:1px solid #6f9bd1"></div>
<svg class="a" style="left:1633.5px;top:646.5px" width="8" height="8" viewBox="0 0 8 8"><rect x="0.5" y="0" width="6" height="1.1" fill="#2a3f60"/><path d="M0 3 L7 3 L3.5 7 Z" fill="#1e3358"/></svg>
<svg class="a" style="left:1649px;top:646.5px" width="8" height="8" viewBox="0 0 8 8"><path d="M0.8 0.8 L7.2 7.2 M7.2 0.8 L0.8 7.2" stroke="#000" stroke-width="1.6"/></svg>
<div class="a" style="left:376px;top:661px;width:1285px;height:190px;background:#fff;border-left:1px solid #9db9de"></div>
<div class="a" style="left:1645px;top:661px;width:16px;height:190px;background:#f0f0f0"></div>
<svg class="a" style="left:1648px;top:668px" width="10" height="6" viewBox="0 0 10 6"><path d="M1 5.5 L5 1.5 L9 5.5" fill="none" stroke="#555" stroke-width="1.3"/></svg>
<div class="a" style="left:1646px;top:783px;width:15px;height:48px;background:#cdcdcd"></div>
<svg class="a" style="left:1648px;top:838px" width="10" height="6" viewBox="0 0 10 6"><path d="M1 0.5 L5 4.5 L9 0.5" fill="none" stroke="#555" stroke-width="1.3"/></svg>
<svg class="a" style="left:380px;top:818px" width="13" height="13" viewBox="0 0 13 13"><circle cx="6.5" cy="6.5" r="5.8" fill="#fff" stroke="#6b8fc9" stroke-width="1"/><rect x="5.7" y="5.2" width="1.7" height="4.6" fill="#1f4fb3"/><rect x="5.7" y="3" width="1.7" height="1.5" fill="#1f4fb3"/></svg>
<div class="t" style="top:819.00px;font-size:13px;color:#111;font-family:'Liberation Mono',monospace;left:395.60px;line-height:13px;letter-spacing:-0.9px">IRB_6700_205kg_2.80m (Station): 10010 - Motors OFF state</div>
<div class="t" style="top:819.00px;font-size:13px;color:#111;font-family:'Liberation Mono',monospace;left:1045.00px;line-height:13px;letter-spacing:-0.9px">11/05/2022 11:21:28</div>
<div class="t" style="top:819.00px;font-size:13px;color:#111;font-family:'Liberation Mono',monospace;left:1201.70px;line-height:13px;letter-spacing:-0.9px">Event Log</div>
<svg class="a" style="left:380px;top:834px" width="13" height="13" viewBox="0 0 13 13"><circle cx="6.5" cy="6.5" r="5.8" fill="#fff" stroke="#6b8fc9" stroke-width="1"/><rect x="5.7" y="5.2" width="1.7" height="4.6" fill="#1f4fb3"/><rect x="5.7" y="3" width="1.7" height="1.5" fill="#1f4fb3"/></svg>
<div class="t" style="top:835.00px;font-size:13px;color:#111;font-family:'Liberation Mono',monospace;left:395.60px;line-height:13px;letter-spacing:-0.9px">IRB_6700_205kg_2.80m (Station): 10011 - Motors ON state</div>
<div class="t" style="top:835.00px;font-size:13px;color:#111;font-family:'Liberation Mono',monospace;left:1045.00px;line-height:13px;letter-spacing:-0.9px">11/05/2022 11:21:31</div>
<div class="t" style="top:835.00px;font-size:13px;color:#111;font-family:'Liberation Mono',monospace;left:1201.70px;line-height:13px;letter-spacing:-0.9px">Event Log</div>
<div class="a" style="left:0px;top:850px;width:1661px;height:21px;background:#c8d4e6;border-top:1px solid #8db0d8;border-radius:0 0 0 9px"></div>
<div class="a" style="left:1541px;top:852px;width:2px;height:19px;background:#e8eef6"></div>
<div class="a" style="left:1543px;top:853px;width:116px;height:18px;background:#3db472;border-radius:0 0 8px 0"></div>
<div class="t" style="top:858.00px;font-size:11.3px;color:#122;left:1550.30px;line-height:11.3px;">Controller status: 1/1</div>
<div class="a" style="left:351px;top:146px;width:1086px;height:675px;background:#fff;border:1px solid #6f6f6f;box-shadow:0 2px 13px rgba(0,0,0,.34)"></div>
<svg class="a" style="left:361px;top:155px" width="17" height="16" viewBox="0 0 17 16"><circle cx="8.5" cy="8.5" r="6.3" fill="none" stroke="#8a8a8a" stroke-width="2.2"/><circle cx="8.5" cy="8.5" r="2.4" fill="#f39a1e"/><path d="M1 2 Q4 -0.5 7 3" fill="none" stroke="#444" stroke-width="1.1"/><path d="M5 1.8 L8 4.5 L5 5 Z" fill="#333"/></svg>
<div class="t" style="top:156.00px;font-size:15px;color:#000;left:384.30px;line-height:15px;">Open</div>
<svg class="a" style="left:1411px;top:157px" width="12" height="12" viewBox="0 0 12 12"><path d="M0.5 0.5 L11.5 11.5 M11.5 0.5 L0.5 11.5" stroke="#111" stroke-width="1.1"/></svg>
<svg class="a" style="left:365px;top:196px" width="15" height="11" viewBox="0 0 15 11"><path d="M14 5.5 H1.5 M6 1 L1.5 5.5 L6 10" fill="none" stroke="#c2c2c2" stroke-width="1.1"/></svg>
<svg class="a" style="left:399px;top:196px" width="15" height="11" viewBox="0 0 15 11"><path d="M1 5.5 H13.5 M9 1 L13.5 5.5 L9 10" fill="none" stroke="#c2c2c2" stroke-width="1.1"/></svg>
<svg class="a" style="left:428px;top:199px" width="9" height="6" viewBox="0 0 9 6"><path d="M1 1 L4.5 4.5 L8 1" fill="none" stroke="#c8c8c8" stroke-width="1"/></svg>
<svg class="a" style="left:448px;top:195px" width="13" height="14" viewBox="0 0 13 14"><path d="M6.5 13.5 V1.5 M1.5 6.5 L6.5 1.5 L11.5 6.5" fill="none" stroke="#555" stroke-width="1.2"/></svg>
<div class="a" style="left:468px;top:184px;width:728px;height:34px;border:1px solid #d9d9d9;background:#fff"></div>
<div class="a" style="left:1159px;top:184px;width:1px;height:34px;background:#d9d9d9"></div>
<svg class="a" style="left:473px;top:192px" width="12" height="16" viewBox="0 0 12 16"><path d="M0.5 1 L5 1 L5 3 L11 3 L11 15 L0.5 15 Z" fill="#f4cf63"/><path d="M0.5 1 L3.5 2.5 L3.5 15 L0.5 14 Z" fill="#e4b33c"/></svg>
<svg class="a" style="left:496.3px;top:196px" width="6" height="8" viewBox="0 0 6 8"><path d="M1 0.8 L4.2 3.9 L1 7" fill="none" stroke="#666" stroke-width="1.2"/></svg>
<svg class="a" style="left:558.8px;top:196px" width="6" height="8" viewBox="0 0 6 8"><path d="M1 0.8 L4.2 3.9 L1 7" fill="none" stroke="#666" stroke-width="1.2"/></svg>
<svg class="a" style="left:632.5px;top:196px" width="6" height="8" viewBox="0 0 6 8"><path d="M1 0.8 L4.2 3.9 L1 7" fill="none" stroke="#666" stroke-width="1.2"/></svg>
<svg class="a" style="left:680.4px;top:196px" width="6" height="8" viewBox="0 0 6 8"><path d="M1 0.8 L4.2 3.9 L1 7" fill="none" stroke="#666" stroke-width="1.2"/></svg>
<svg class="a" style="left:791.4px;top:196px" width="6" height="8" viewBox="0 0 6 8"><path d="M1 0.8 L4.2 3.9 L1 7" fill="none" stroke="#666" stroke-width="1.2"/></svg>
<div class="t" style="top:194.00px;font-size:13.6px;color:#2b2b2b;left:505.80px;line-height:13.6px;letter-spacing:-0.061px;">This PC</div>
<div class="t" style="top:194.00px;font-size:13.6px;color:#2b2b2b;left:572.20px;line-height:13.6px;letter-spacing:-0.457px;">USB (H:)</div>
<div class="t" style="top:194.00px;font-size:13.6px;color:#2b2b2b;left:646.50px;line-height:13.6px;letter-spacing:0.600px;">abb</div>
<div class="t" style="top:194.00px;font-size:13.6px;color:#2b2b2b;left:694.50px;line-height:13.6px;letter-spacing:0.039px;">server on ABB</div>
<div class="t" style="top:194.00px;font-size:13.6px;color:#2b2b2b;left:805.60px;line-height:13.6px;letter-spacing:0.582px;">config</div>
<svg class="a" style="left:1136.5px;top:198.5px" width="11" height="7" viewBox="0 0 11 7"><path d="M1 1 L5.5 5.5 L10 1" fill="none" stroke="#555" stroke-width="1.2"/></svg>
<svg class="a" style="left:1171px;top:194px" width="14" height="14" viewBox="0 0 14 14"><path d="M9.5 2.2 A5.8 5.8 0 1 1 4.5 2.2" fill="none" stroke="#555" stroke-width="1.2"/><path d="M3 0 L5.5 2.6 L2.5 4.5" fill="none" stroke="#555" stroke-width="1.1"/></svg>
<div class="a" style="left:1207px;top:184px;width:219px;height:34px;border:1px solid #d9d9d9;background:#fff"></div>
<div class="t" style="top:193.00px;font-size:15px;color:#6d6d6d;left:1225.00px;line-height:15px;letter-spacing:0.431px;">Search config</div>
<svg class="a" style="left:1403px;top:194px" width="13" height="13" viewBox="0 0 13 13"><circle cx="8" cy="5" r="3.6" fill="none" stroke="#555" stroke-width="1.3"/><path d="M5.5 7.5 L1 12" stroke="#555" stroke-width="1.5"/></svg>
<div class="a" style="left:353px;top:224px;width:1083px;height:33px;background:#f4f5f7;border-bottom:1px solid #e6e7e9"></div>
<svg class="a" style="left:401px;top:237px" width="8" height="5" viewBox="0 0 8 5"><path d="M0 0 L8 0 L4 4.5 Z" fill="#1c3a66"/></svg>
<div class="a" style="left:396px;top:244px;width:1.5px;height:1.5px;background:#3d5a8a"></div>
<svg class="a" style="left:1303px;top:232px" width="15" height="15" viewBox="0 0 15 15"><rect x="0.5" y="1" width="3" height="3" fill="none" stroke="#777" stroke-width="0.8"/><rect x="0.5" y="6" width="3" height="3" fill="none" stroke="#777" stroke-width="0.8"/><rect x="0.5" y="11" width="3" height="3" fill="none" stroke="#777" stroke-width="0.8"/><circle cx="2" cy="7.5" r="0.9" fill="#e3a200"/><circle cx="2" cy="12.5" r="0.9" fill="#d33"/><path d="M5 2.5 H14 M5 7.5 H14 M5 12.5 H14" stroke="#666" stroke-width="0.9" stroke-dasharray="2.5 1"/></svg>
<svg class="a" style="left:1331px;top:238px" width="8" height="5" viewBox="0 0 8 5"><path d="M0 0 L8 0 L4 4.5 Z" fill="#1c3a66"/></svg>
<svg class="a" style="left:1363px;top:232px" width="17" height="14" viewBox="0 0 17 14"><rect x="0.5" y="0.5" width="16" height="13" fill="#fff" stroke="#666" stroke-width="1"/><rect x="11.5" y="1" width="4.5" height="12" fill="#4a90d9"/></svg>
<svg class="a" style="left:1402px;top:231px" width="18" height="18" viewBox="0 0 18 18"><circle cx="9" cy="9" r="8.6" fill="#0a5fc4"/><text x="9" y="13.6" font-size="13" font-weight="bold" text-anchor="middle" fill="#fff" font-family="Liberation Sans">?</text></svg>
<div class="a" style="left:504px;top:257px;width:16px;height:315px;background:#f0f0f0"></div>
<div class="a" style="left:505px;top:314px;width:14px;height:83px;background:#cdcdcd"></div>
<svg class="a" style="left:507px;top:263px" width="10" height="6" viewBox="0 0 10 6"><path d="M1 5.5 L5 1.5 L9 5.5" fill="none" stroke="#606060" stroke-width="1.3"/></svg>
<svg class="a" style="left:507px;top:559px" width="10" height="6" viewBox="0 0 10 6"><path d="M1 0.5 L5 4.5 L9 0.5" fill="none" stroke="#606060" stroke-width="1.3"/></svg>
<div class="a" style="left:353px;top:517px;width:150px;height:25px;background:#d9d9d9"></div>
<div class="t" style="top:272.00px;font-size:15.3px;color:#1a1a1a;left:400.90px;line-height:15.3px;letter-spacing:-0.068px;">This PC</div>
<div class="t" style="top:304.00px;font-size:16.5px;color:#1a1a1a;left:412.60px;line-height:16.5px;letter-spacing:0.098px;">3D Objects</div>
<div class="t" style="top:335.00px;font-size:16.5px;color:#1a1a1a;left:412.60px;line-height:16.5px;letter-spacing:0.245px;">Desktop</div>
<div class="t" style="top:366.00px;font-size:16.5px;color:#1a1a1a;left:412.60px;line-height:16.5px;letter-spacing:0.206px;">Documents</div>
<div class="t" style="top:398.00px;font-size:16.5px;color:#1a1a1a;left:412.60px;line-height:16.5px;letter-spacing:0.521px;">Downloads</div>
<div class="t" style="top:429.00px;font-size:16.5px;color:#1a1a1a;left:412.60px;line-height:16.5px;letter-spacing:0.078px;">Music</div>
<div class="t" style="top:461.00px;font-size:16.5px;color:#1a1a1a;left:412.60px;line-height:16.5px;letter-spacing:-0.201px;">Pictures</div>
<div class="t" style="top:493.00px;font-size:16.5px;color:#1a1a1a;left:412.60px;line-height:16.5px;letter-spacing:0.169px;">Videos</div>
<div class="t" style="top:524.00px;font-size:13.2px;color:#1a1a1a;left:408.70px;line-height:13.2px;letter-spacing:-0.243px;">USB (H:)</div>
<div class="t" style="top:558.00px;font-size:13.2px;color:#1a1a1a;left:400.00px;line-height:13.2px;letter-spacing:-0.229px;">USB (H:)</div>
<svg class="a" style="left:372px;top:271px" width="24" height="19" viewBox="0 0 24 19"><path d="M7 1 L23 4 L22 13 L6 10 Z" fill="#3aa0e8" stroke="#2a6fb5" stroke-width="0.6"/><path d="M1 15 L15 13 L22 16 L8 18.5 Z" fill="#dfe3e8" stroke="#b5bcc5" stroke-width="0.6"/><path d="M12 11 L13 13" stroke="#999"/></svg>
<svg class="a" style="left:384px;top:301px" width="21" height="19" viewBox="0 0 21 19"><path d="M10.5 0 L21 4 L21 14 L10.5 18.5 L0 14 L0 4 Z" fill="#4ac6d8"/><path d="M10.5 8 L21 4 L21 14 L10.5 18.5 Z" fill="#1a8aa8"/><path d="M0 4 L10.5 8 L10.5 18.5 L0 14 Z" fill="#9fe6ef"/></svg>
<svg class="a" style="left:384px;top:336px" width="21" height="14" viewBox="0 0 21 14"><rect x="0.5" y="0.5" width="20" height="13" fill="#1e8ae6" stroke="#0f66b8" stroke-width="0.8"/><rect x="1" y="12" width="19" height="2" fill="#0f5ea8"/></svg>
<svg class="a" style="left:386px;top:364px" width="17" height="19" viewBox="0 0 17 19"><path d="M0.5 0.5 L12 0.5 L16.5 5 L16.5 18.5 L0.5 18.5 Z" fill="#fff" stroke="#888" stroke-width="0.9"/><rect x="3" y="3" width="6" height="5" fill="#7ab8e8"/><path d="M3 10 H14 M3 12.5 H14 M3 15 H14" stroke="#666" stroke-width="0.9"/></svg>
<svg class="a" style="left:385px;top:396px" width="20" height="19" viewBox="0 0 20 19"><path d="M6 0 H14 V9 H19.5 L10 18.5 L0.5 9 H6 Z" fill="#2c84dc"/></svg>
<svg class="a" style="left:388px;top:427px" width="14" height="19" viewBox="0 0 14 19"><path d="M5 1 L5 15" stroke="#1e7fd8" stroke-width="1.8"/><ellipse cx="3.5" cy="15.5" rx="3.5" ry="2.8" fill="#1e7fd8"/><path d="M5 1 Q11 4 12 10" fill="none" stroke="#1e7fd8" stroke-width="1.8"/></svg>
<svg class="a" style="left:384px;top:460px" width="22" height="16" viewBox="0 0 22 16"><rect x="0.5" y="0.5" width="21" height="15" fill="#fff" stroke="#9a9a9a" stroke-width="0.8"/><rect x="2" y="2" width="18" height="12" fill="#5aa0e0"/><path d="M2 9 Q7 5 12 8 Q16 10 20 8 L20 14 L2 14 Z" fill="#4f8a6a"/><path d="M2 11 Q9 9 20 12 L20 14 L2 14Z" fill="#dfeff8"/></svg>
<svg class="a" style="left:385px;top:489px" width="20" height="21" viewBox="0 0 20 21"><rect x="0.5" y="0.5" width="19" height="20" fill="#3a3a3a"/><rect x="4" y="1.5" width="12" height="18" fill="#4a90e2"/><circle cx="10" cy="7" r="3.3" fill="#e8b020"/><path d="M7 7 Q10 3 13 7" fill="#d23a2a"/><rect x="8" y="12" width="4" height="5" fill="#d23a2a"/><path d="M1.5 2 V19 M18.5 2 V19" stroke="#fff" stroke-width="1.3" stroke-dasharray="1.5 1.5"/></svg>
<svg class="a" style="left:386px;top:525px" width="17" height="10" viewBox="0 0 17 10"><path d="M1 5 L12 3 L16 5 L16 7 L5 9 L1 7 Z" fill="#e6e6e6" stroke="#9a9a9a" stroke-width="0.6"/><path d="M1 7 L5 9 L16 7" fill="none" stroke="#777" stroke-width="0.8"/><rect x="2.5" y="6.8" width="2.5" height="1" fill="#2fb34a"/></svg>
<svg class="a" style="left:378px;top:560px" width="17" height="10" viewBox="0 0 17 10"><path d="M1 5 L12 3 L16 5 L16 7 L5 9 L1 7 Z" fill="#e6e6e6" stroke="#9a9a9a" stroke-width="0.6"/><path d="M1 7 L5 9 L16 7" fill="none" stroke="#777" stroke-width="0.8"/><rect x="2.5" y="6.8" width="2.5" height="1" fill="#2fb34a"/></svg>
<div class="a" style="left:527px;top:261px;width:717px;height:1px;background:#e3e3e3"></div>
<div class="a" style="left:819.7px;top:256px;width:1px;height:5px;background:#e3e3e3"></div>
<div class="a" style="left:974.9px;top:256px;width:1px;height:5px;background:#e3e3e3"></div>
<div class="a" style="left:1105px;top:256px;width:1px;height:5px;background:#e3e3e3"></div>
<div class="a" style="left:1191.5px;top:256px;width:1px;height:5px;background:#e3e3e3"></div>
<div class="a" style="left:831px;top:270px;width:1px;height:28px;background:#e5e5e5"></div>
<div class="a" style="left:971.4px;top:270px;width:1px;height:28px;background:#e5e5e5"></div>
<div class="a" style="left:1112px;top:270px;width:1px;height:28px;background:#e5e5e5"></div>
<div class="a" style="left:1206.6px;top:270px;width:1px;height:28px;background:#e5e5e5"></div>
<svg class="a" style="left:675px;top:257px" width="8" height="4" viewBox="0 0 8 4"><path d="M0.5 3.5 L4 0.5 L7.5 3.5" fill="none" stroke="#999" stroke-width="0.9"/></svg>
<svg class="a" style="left:673px;top:268px" width="11" height="6" viewBox="0 0 11 6"><path d="M1 5 L5.5 1 L10 5" fill="none" stroke="#8a8a8a" stroke-width="1"/></svg>
<div class="t" style="top:278.00px;font-size:13.8px;color:#4c607a;left:532.80px;line-height:13.8px;letter-spacing:0.162px;">Name</div>
<div class="t" style="top:278.00px;font-size:13.8px;color:#4c607a;left:838.40px;line-height:13.8px;letter-spacing:0.396px;">Date modified</div>
<div class="t" style="top:278.00px;font-size:13.8px;color:#4c607a;left:979.20px;line-height:13.8px;">Type</div>
<div class="t" style="top:278.00px;font-size:13.8px;color:#4c607a;left:1119.40px;line-height:13.8px;">Size</div>
<svg class="a" style="left:536px;top:308.2px" width="15" height="17" viewBox="0 0 15 17"><path d="M0.5 0.5 L10 0.5 L14 4.5 L14 16.5 L0.5 16.5 Z" fill="#fff" stroke="#8a8a8a" stroke-width="0.9"/><path d="M10 0.5 L10 4.5 L14 4.5" fill="none" stroke="#8a8a8a" stroke-width="0.9"/></svg>
<div class="t" style="top:311.00px;font-size:13.8px;color:#1a1a1a;left:558.20px;line-height:13.8px;letter-spacing:-0.119px;">D652.cfg</div>
<div class="t" style="top:311.00px;font-size:13.8px;color:#555;left:838.40px;line-height:13.8px;letter-spacing:0.146px;">5/9/2022 12:06 AM</div>
<div class="t" style="top:311.00px;font-size:13.8px;color:#555;left:979.20px;line-height:13.8px;letter-spacing:-0.600px;">CFG File</div>
<div class="t" style="top:311.00px;font-size:13.8px;color:#555;left:596.80px;width:600px;text-align:right;line-height:13.8px;">2 KB</div>
<svg class="a" style="left:536px;top:331.5px" width="15" height="17" viewBox="0 0 15 17"><path d="M0.5 0.5 L10 0.5 L14 4.5 L14 16.5 L0.5 16.5 Z" fill="#fff" stroke="#8a8a8a" stroke-width="0.9"/><path d="M10 0.5 L10 4.5 L14 4.5" fill="none" stroke="#8a8a8a" stroke-width="0.9"/></svg>
<div class="t" style="top:335.00px;font-size:13.8px;color:#1a1a1a;left:558.20px;line-height:13.8px;letter-spacing:-0.401px;">DSQC1030.cfg</div>
<div class="t" style="top:335.00px;font-size:13.8px;color:#555;left:838.40px;line-height:13.8px;letter-spacing:0.146px;">5/9/2022 12:06 AM</div>
<div class="t" style="top:335.00px;font-size:13.8px;color:#555;left:979.20px;line-height:13.8px;letter-spacing:-0.600px;">CFG File</div>
<div class="t" style="top:335.00px;font-size:13.8px;color:#555;left:596.80px;width:600px;text-align:right;line-height:13.8px;">2 KB</div>
<svg class="a" style="left:536px;top:356.3px" width="15" height="17" viewBox="0 0 15 17"><path d="M0.5 0.5 L10 0.5 L14 4.5 L14 16.5 L0.5 16.5 Z" fill="#fff" stroke="#8a8a8a" stroke-width="0.9"/><path d="M10 0.5 L10 4.5 L14 4.5" fill="none" stroke="#8a8a8a" stroke-width="0.9"/></svg>
<div class="t" style="top:359.00px;font-size:13.8px;color:#1a1a1a;left:558.20px;line-height:13.8px;letter-spacing:-0.336px;">EIO.cfg</div>
<div class="t" style="top:359.00px;font-size:13.8px;color:#555;left:838.40px;line-height:13.8px;letter-spacing:0.146px;">5/9/2022 12:06 AM</div>
<div class="t" style="top:359.00px;font-size:13.8px;color:#555;left:979.20px;line-height:13.8px;letter-spacing:-0.600px;">CFG File</div>
<div class="t" style="top:359.00px;font-size:13.8px;color:#555;left:596.80px;width:600px;text-align:right;line-height:13.8px;">2 KB</div>
<svg class="a" style="left:536px;top:379.2px" width="15" height="17" viewBox="0 0 15 17"><path d="M0.5 0.5 L10 0.5 L14 4.5 L14 16.5 L0.5 16.5 Z" fill="#fff" stroke="#8a8a8a" stroke-width="0.9"/><path d="M10 0.5 L10 4.5 L14 4.5" fill="none" stroke="#8a8a8a" stroke-width="0.9"/></svg>
<div class="t" style="top:382.00px;font-size:13.8px;color:#1a1a1a;left:558.20px;line-height:13.8px;letter-spacing:-0.600px;">SYS.cfg</div>
<div class="t" style="top:382.00px;font-size:13.8px;color:#555;left:838.40px;line-height:13.8px;letter-spacing:-0.014px;">2/15/2022 8:51 PM</div>
<div class="t" style="top:382.00px;font-size:13.8px;color:#555;left:979.20px;line-height:13.8px;letter-spacing:-0.600px;">CFG File</div>
<div class="t" style="top:382.00px;font-size:13.8px;color:#555;left:596.80px;width:600px;text-align:right;line-height:13.8px;">1 KB</div>
<div class="a" style="left:1261px;top:257px;width:1px;height:315px;background:#ececec"></div>
<div class="t" style="top:409.00px;font-size:11.3px;color:#6d6d6d;left:1291.50px;line-height:11.3px;letter-spacing:-0.061px;">Select a file to preview.</div>
<div class="a" style="left:353px;top:571px;width:1083px;height:249px;background:#f0f0f0"></div>
<svg class="a" style="left:541px;top:579.3px" width="14" height="14" viewBox="0 0 14 14"><circle cx="7" cy="7" r="6.3" fill="#fff" stroke="#333" stroke-width="1"/></svg>
<svg class="a" style="left:541px;top:637.1px" width="14" height="14" viewBox="0 0 14 14"><circle cx="7" cy="7" r="6.3" fill="#fff" stroke="#333" stroke-width="1"/></svg>
<svg class="a" style="left:541px;top:678px" width="14" height="14" viewBox="0 0 14 14"><circle cx="7" cy="7" r="6.3" fill="#fff" stroke="#333" stroke-width="1"/><circle cx="7" cy="7" r="3.6" fill="#222"/></svg>
<div class="t" style="top:578.00px;font-size:14px;color:#1a6fd6;left:559.30px;line-height:14px;letter-spacing:0.134px;">Delete existing</div>
<div class="t" style="top:595.00px;font-size:14px;color:#1a6fd6;left:559.30px;line-height:14px;letter-spacing:0.163px;">parameters before</div>
<div class="t" style="top:612.00px;font-size:14px;color:#1a6fd6;left:559.30px;line-height:14px;letter-spacing:0.258px;">loading</div>
<div class="t" style="top:636.00px;font-size:14px;color:#1a6fd6;left:559.30px;line-height:14px;letter-spacing:0.051px;">Load parameters if</div>
<div class="t" style="top:653.00px;font-size:14px;color:#1a6fd6;left:559.30px;line-height:14px;letter-spacing:0.116px;">no duplicates</div>
<div class="t" style="top:677.00px;font-size:14px;color:#1a6fd6;left:559.30px;line-height:14px;letter-spacing:0.011px;">Load parameters</div>
<div class="t" style="top:694.00px;font-size:14px;color:#1a6fd6;left:559.30px;line-height:14px;letter-spacing:-0.017px;">and replace</div>
<div class="t" style="top:710.00px;font-size:14px;color:#1a6fd6;left:559.30px;line-height:14px;letter-spacing:0.140px;">duplicates</div>
<div class="t" style="top:753.00px;font-size:13.8px;color:#1a1a1a;left:470.50px;line-height:13.8px;letter-spacing:-0.047px;">File Name.(N):</div>
<div class="a" style="left:566px;top:747px;width:634px;height:25px;background:#fff;border:1px solid #a8a8a8"></div>
<div class="t" style="top:753.00px;font-size:13.8px;color:#000;left:570.20px;line-height:13.8px;letter-spacing:-0.382px;">"EIO" "SYS"</div>
<svg class="a" style="left:1186px;top:755px" width="10" height="6" viewBox="0 0 10 6"><path d="M1 1 L5 5 L9 1" fill="none" stroke="#555" stroke-width="1.1"/></svg>
<div class="a" style="left:1213px;top:747px;width:203px;height:25px;background:#e5e5e5;border:1px solid #b5b5b5"></div>
<div class="t" style="top:752.00px;font-size:14px;color:#1a1a1a;left:1216.80px;line-height:14px;letter-spacing:0.036px;">Configuration Files (*.cfg)</div>
<svg class="a" style="left:1402px;top:755px" width="10" height="6" viewBox="0 0 10 6"><path d="M1 1 L5 5 L9 1" fill="none" stroke="#555" stroke-width="1.1"/></svg>
<div class="a" style="left:1214px;top:780px;width:93px;height:26px;background:#e1e1e1;border:2px solid #0078d7"></div>
<div class="t" style="top:785.00px;font-size:14px;color:#000;left:956.30px;width:600px;text-align:center;line-height:14px;letter-spacing:-0.194px;">Open(O)</div>
<div class="a" style="left:1316px;top:780px;width:99px;height:26px;background:#e1e1e1;border:1px solid #adadad"></div>
<div class="t" style="top:785.00px;font-size:14px;color:#000;left:1349.50px;line-height:14px;letter-spacing:-0.296px;">Cancel</div>
<svg class="a" style="left:1422px;top:806px" width="11" height="11" viewBox="0 0 11 11"><g fill="#b0b0b0"><rect x="8" y="0" width="2" height="2"/><rect x="4" y="4" width="2" height="2"/><rect x="8" y="4" width="2" height="2"/><rect x="0" y="8" width="2" height="2"/><rect x="4" y="8" width="2" height="2"/><rect x="8" y="8" width="2" height="2"/></g></svg>
<div class="a" style="left:854px;top:33px;width:135px;height:27px;border:3px solid #f39419;border-radius:2px"></div>
<svg class="a" style="left:989.2px;top:32.2px" width="29.6" height="29.6" viewBox="0 0 29.6 29.6"><circle cx="14.8" cy="14.8" r="14.8" fill="#f39419"/></svg>
<div class="t" style="top:36.00px;font-size:20px;color:#000;left:704.30px;width:600px;text-align:center;line-height:20px;">1</div>
<div class="a" style="left:520px;top:350px;width:109px;height:55px;border:3px solid #f39419;border-radius:2px"></div>
<svg class="a" style="left:629.3000000000001px;top:362.8px" width="29.6" height="29.6" viewBox="0 0 29.6 29.6"><circle cx="14.8" cy="14.8" r="14.8" fill="#f39419"/></svg>
<div class="t" style="top:367.00px;font-size:20px;color:#000;left:344.40px;width:600px;text-align:center;line-height:20px;">2</div>
<div class="a" style="left:536px;top:672px;width:157px;height:55px;border:3px solid #f39419;border-radius:2px"></div>
<svg class="a" style="left:693.4000000000001px;top:684.1px" width="29.6" height="29.6" viewBox="0 0 29.6 29.6"><circle cx="14.8" cy="14.8" r="14.8" fill="#f39419"/></svg>
<div class="t" style="top:688.00px;font-size:20px;color:#000;left:408.50px;width:600px;text-align:center;line-height:20px;">3</div>
<div class="a" style="left:1206px;top:775px;width:108px;height:36px;border:3px solid #f39419;border-radius:2px"></div>
<svg class="a" style="left:1314.5px;top:778.0px" width="29.6" height="29.6" viewBox="0 0 29.6 29.6"><circle cx="14.8" cy="14.8" r="14.8" fill="#f39419"/></svg>
<div class="t" style="top:782.00px;font-size:20px;color:#000;left:1029.60px;width:600px;text-align:center;line-height:20px;">4</div>
</body></html>
